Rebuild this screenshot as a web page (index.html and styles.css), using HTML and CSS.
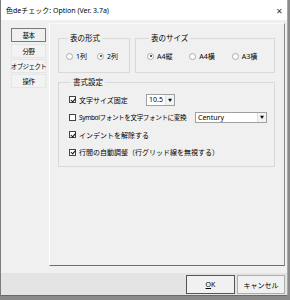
FILE: index.html
```html
<!DOCTYPE html>
<html lang="ja">
<head>
    <meta charset="UTF-8">
    <meta name="viewport" content="width=device-width, initial-scale=1.0">
    <title>Option</title>
    <link rel="stylesheet" href="styles.css">
</head>
<body>
    <div class="window">
        <div class="titlebar">
            <span class="title">色deチェック: Option (Ver. 3.7a)</span>
            <span class="close">✕</span>
        </div>

        <div class="main">
            <div class="tabs">
                <div class="tab active">基本</div>
                <div class="tab">分野</div>
                <div class="tab">オブジェクト</div>
                <div class="tab">操作</div>
            </div>

            <div class="panel">
                <div class="group-row">
                    <fieldset class="group group-form">
                        <legend>表の形式</legend>
                        <div class="radios">
                            <span class="radio-item narrow"><span class="radio"></span>1列</span>
                            <span class="radio-item narrow"><span class="radio on"></span>2列</span>
                        </div>
                    </fieldset>
                    <fieldset class="group group-size">
                        <legend>表のサイズ</legend>
                        <div class="radios">
                            <span class="radio-item"><span class="radio on"></span>A4縦</span>
                            <span class="radio-item"><span class="radio"></span>A4横</span>
                            <span class="radio-item"><span class="radio"></span>A3横</span>
                        </div>
                    </fieldset>
                </div>

                <fieldset class="group group-format">
                    <legend>書式設定</legend>
                    <div class="row">
                        <span class="check on"></span>
                        <span class="label w-size">文字サイズ固定</span>
                        <span class="combo combo-small"><span class="combo-text">10.5</span><span class="arrow">▼</span></span>
                    </div>
                    <div class="row">
                        <span class="check"></span>
                        <span class="label w-symbol">Symbolフォントを文字フォントに変換</span>
                        <span class="combo combo-wide"><span class="combo-text">Century</span><span class="arrow">▼</span></span>
                    </div>
                    <div class="row">
                        <span class="check on"></span>
                        <span class="label">インデントを解除する</span>
                    </div>
                    <div class="row">
                        <span class="check on"></span>
                        <span class="label">行間の自動調整（行グリッド線を無視する）</span>
                    </div>
                </fieldset>
            </div>
        </div>

        <div class="gap"></div>

        <div class="footer">
            <button class="btn default"><u>O</u>K</button>
            <button class="btn">キャンセル</button>
        </div>
    </div>
</body>
</html>
```

FILE: styles.css
```css
body {
    margin: 0;
    padding: 0;
    background-color: #8a8a8a;
    font-family: "Noto Sans", "Noto Sans CJK JP", sans-serif;
    font-size: 7px;
    color: #000;
}

.window {
    width: 288px;
    height: 296px;
    box-sizing: border-box;
    background-color: #f0f0f0;
    border-left: 1px solid #7c7c7c;
    border-right: 1px solid #a8a8a8;
    border-bottom: 1px solid #6a6a6a;
    display: flex;
    flex-direction: column;
    white-space: nowrap;
}

.titlebar {
    height: 20px;
    background-color: #fff;
    display: flex;
    align-items: center;
    justify-content: space-between;
    padding-left: 5px;
    padding-right: 3px;
}

.close {
    font-size: 8px;
    color: #333;
    width: 8px;
}

.main {
    display: flex;
    height: 246px;
}

.tabs {
    width: 48px;
    padding-top: 8px;
    padding-left: 10px;
    box-sizing: border-box;
}

.tab {
    width: 35px;
    height: 14px;
    box-sizing: border-box;
    border: 1px solid #e6e6e6;
    background-color: #f3f3f3;
    display: flex;
    align-items: center;
    justify-content: center;
    margin-bottom: 1px;
    font-size: 6.5px;
    letter-spacing: -0.6px;
}

.tab.active {
    border: 1px solid #7a7a7a;
    background-color: #f0f0f0;
    margin-bottom: 2px;
}

.panel {
    flex: 1;
    margin-top: 3px;
    margin-right: 2px;
    border-left: 1px solid #fff;
    border-top: 1px solid #fafafa;
    border-right: 1px solid #8a8a8a;
    border-bottom: 1px solid #6e6e6e;
    padding: 9px 0 0 8px;
}

.group-row {
    display: flex;
    gap: 5px;
    margin-bottom: 4px;
}

.group {
    margin: 0;
    padding: 0;
    border: 1px solid #d9d9d9;
    box-sizing: border-box;
    min-inline-size: 0;
}

.group legend {
    padding: 0 2px;
    margin-left: 2px;
    line-height: 10px;
    font-size: 7.5px;
}

.group-form {
    width: 72px;
    height: 40px;
    padding-left: 7px;
}

.group-size {
    width: 140px;
    height: 40px;
    padding-left: 11px;
}

.group-format {
    width: 217px;
    height: 90px;
    padding: 4px 0 0 10px;
}

.radios {
    display: flex;
    height: 30px;
    align-items: center;
    margin-top: -2px;
}

.radio-item {
    display: flex;
    align-items: center;
    width: 45px;
}

.radio-item.narrow {
    width: 31px;
}

.radio {
    width: 5px;
    height: 5px;
    border: 1px solid #aaa;
    border-radius: 50%;
    background-color: #fff;
    margin-right: 3px;
    position: relative;
}

.radio.on::after {
    content: "";
    position: absolute;
    left: 1.5px;
    top: 1.5px;
    width: 2px;
    height: 2px;
    border-radius: 50%;
    background-color: #222;
}

.row {
    display: flex;
    align-items: center;
    height: 17.5px;
}

.check {
    width: 7px;
    height: 7px;
    box-sizing: border-box;
    border: 1px solid #444;
    background-color: #fff;
    margin-right: 3px;
    position: relative;
    flex-shrink: 0;
}

.check.on::after {
    content: "";
    position: absolute;
    left: 1.5px;
    top: -0.5px;
    width: 1.5px;
    height: 3.5px;
    border: solid #111;
    border-width: 0 1px 1px 0;
    transform: rotate(40deg);
}

.w-size {
    width: 67px;
}

.w-symbol {
    width: 116px;
    flex-shrink: 0;
    overflow: hidden;
    font-size: 6.6px;
    letter-spacing: -0.4px;
}

.combo {
    display: flex;
    align-items: center;
    justify-content: space-between;
    height: 12px;
    box-sizing: border-box;
    border: 1px solid #a0a0a0;
    background-color: #fff;
    padding-left: 2px;
    flex-shrink: 0;
}

.combo-small {
    width: 29px;
}

.combo-wide {
    width: 72px;
    height: 11px;
}

.arrow {
    width: 8px;
    height: 100%;
    border-left: 1px solid #e0e0e0;
    background-color: #f3f3f3;
    font-size: 4px;
    display: flex;
    align-items: center;
    justify-content: center;
}

.gap {
    height: 7px;
}

.footer {
    flex: 1;
    background-color: #e4e4e4;
    display: flex;
    justify-content: flex-end;
    gap: 2px;
    padding: 2px 2px 0 0;
}

.btn {
    width: 48px;
    height: 19px;
    box-sizing: border-box;
    border: 1px solid #adadad;
    background-color: #f1f1f1;
    font-family: inherit;
    font-size: 7px;
    padding: 0;
    color: #000;
}

.btn.default {
    width: 49px;
    border: 1px solid #555;
}
```
